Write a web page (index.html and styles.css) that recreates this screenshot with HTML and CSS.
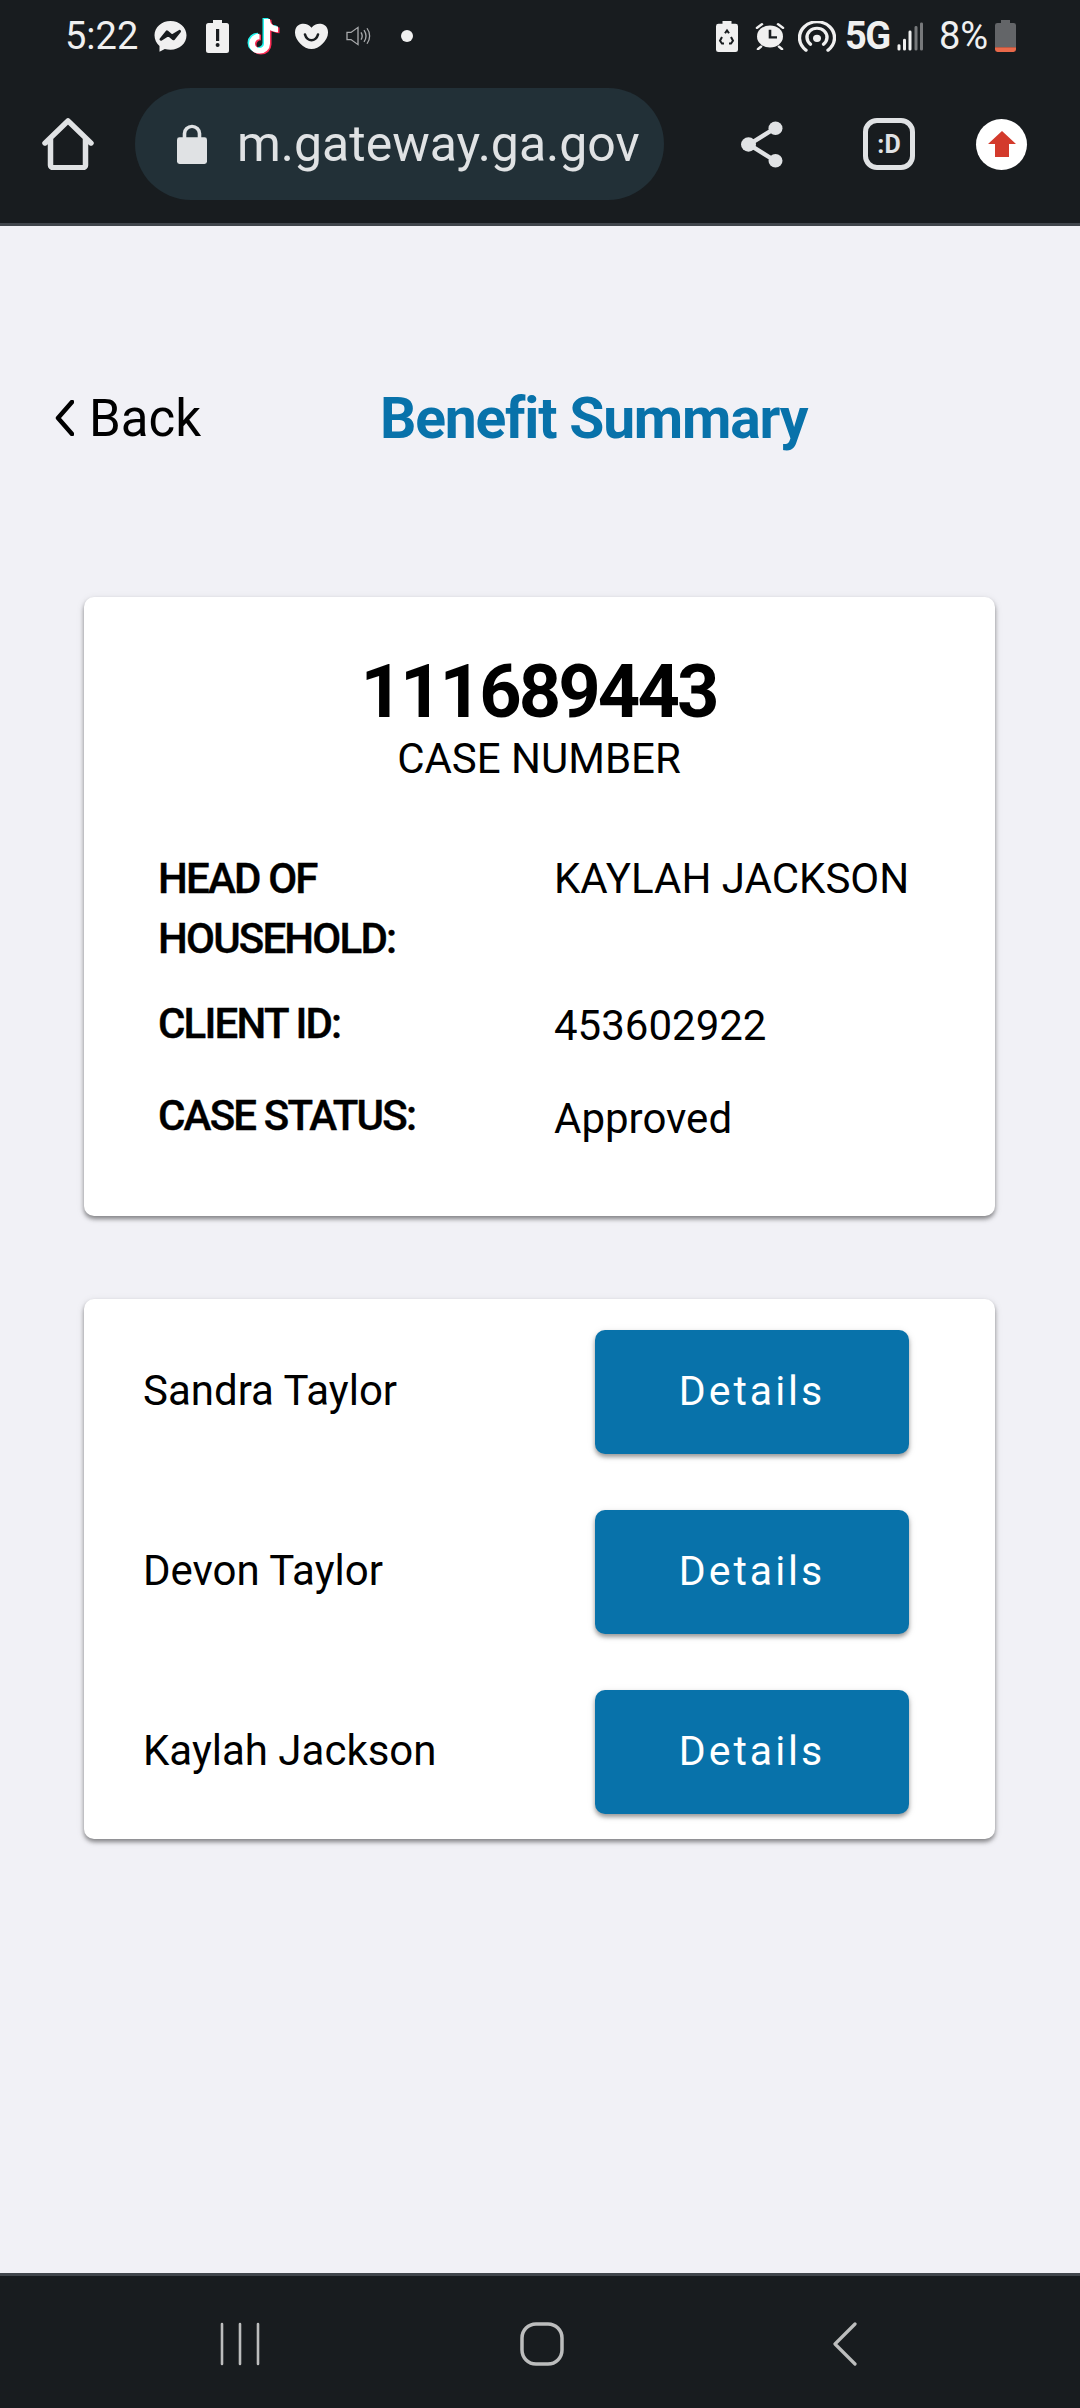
FILE: index.html
```html
<!DOCTYPE html>
<html lang="en">
<head>
<meta charset="utf-8">
<title>Benefit Summary</title>
<link rel="stylesheet" href="styles.css">
</head>
<body>
<header class="chrome">
  <div class="status">
    <div class="status-left">
      <span class="time">5:22</span>
      <svg class="i-msg" viewBox="0 0 33 35" preserveAspectRatio="none"><path fill="#f0f0f0" d="M16.5 1C7.5 1 .5 7.6.5 16.3c0 4.6 1.9 8.5 5 11.2v6.3l5.3-3c1.8.5 3.7.8 5.7.8 9 0 16-6.6 16-15.300S25.5 1 16.5 1z"/><path fill="none" stroke="#181c1f" stroke-width="3" stroke-linejoin="round" d="M7 20.5l6-8 5 4.5 7.5-5-6 8-5-4.5z"/></svg>
      <svg class="i-batt" viewBox="0 0 23 33"><path fill="#f0f0f0" d="M7 0h9v3h4.500A2.500 2.500 0 0 1 23 5.500V30.500A2.500 2.500 0 0 1 20.500 33h-18A2.500 2.500 0 0 1 0 30.500V5.500A2.500 2.500 0 0 1 2.500 3H7z"/><rect x="10" y="9" width="3.200" height="12" fill="#181c1f"/><circle cx="11.600" cy="25" r="2" fill="#181c1f"/></svg>
      <svg class="i-tik" viewBox="0 0 35 41" preserveAspectRatio="none"><g fill="none" stroke-width="6"><path stroke="#25f4ee" transform="translate(-1.500 -1)" d="M20 2v26a7.500 7.500 0 1 1-7.500-7.500M20 4c.5 5 5 9 11 9"/><path stroke="#fe2c55" transform="translate(1.500 1)" d="M20 2v26a7.500 7.500 0 1 1-7.500-7.500M20 4c.5 5 5 9 11 9"/><path stroke="#fff" d="M20 2v26a7.500 7.500 0 1 1-7.500-7.500M20 4c.5 5 5 9 11 9"/></g></svg>
      <svg class="i-heart" viewBox="0 0 33 27" preserveAspectRatio="none"><path fill="#f0f0f0" d="M16.500 5C14 1.500 10 0 6 1 2 2 0 5.500 0 10c0 8 9 17 16.500 17S33 18 33 10c0-4.500-2-8-6-9-4-1-8 .5-10.500 4z"/><path fill="none" stroke="#181c1f" stroke-width="2.600" stroke-linecap="round" d="M10 12c1 4 4 6 6.500 6s5.500-2 6.500-6"/></svg>
      <svg class="i-vol" viewBox="0 0 25 22" preserveAspectRatio="none"><g fill="none" stroke="#a9abad" stroke-width="1.300"><path d="M1 7h4l7-5.500v19L5 15H1z"/><path d="M15 7c1.500 2.500 1.500 5.500 0 8M18 4.500c2.500 4 2.500 9 0 13M21 2.500c3.500 5 3.500 12 0 17"/></g></svg>
      <span class="dot"></span>
    </div>
    <div class="status-right">
      <svg class="i-rec" viewBox="0 0 22 33" preserveAspectRatio="none"><path fill="#f0f0f0" d="M6.500 0h9v3h4A2.500 2.500 0 0 1 22 5.500v25a2.500 2.500 0 0 1-2.500 2.500h-17A2.500 2.500 0 0 1 0 30.500v-25A2.500 2.500 0 0 1 2.500 3h4z"/><path fill="none" stroke="#181c1f" stroke-width="2" d="M9 13l2-3 2 3M15 17l2 4-2 3h-2M8 24H6l-2-3 2-4"/></svg>
      <svg class="i-alarm" viewBox="0 0 30 33" preserveAspectRatio="none"><circle cx="15" cy="17" r="13" fill="#f0f0f0"/><path fill="none" stroke="#181c1f" stroke-width="2.600" d="M15 9v9h7"/><path fill="none" stroke="#f0f0f0" stroke-width="2.600" stroke-linecap="round" d="M2 7l5-4.500M28 7l-5-4.500M6 29l-3 3M24 29l3 3"/></svg>
      <svg class="i-hot" viewBox="0 0 38 34" preserveAspectRatio="none"><g fill="none" stroke="#f0f0f0" stroke-width="3.400" stroke-linecap="round"><path d="M8 32A17.500 17.500 0 1 1 30 32"/><path d="M12.500 25.500A10 10 0 1 1 25.500 25.500"/></g><circle cx="19" cy="19" r="4" fill="#f0f0f0"/></svg>
      <span class="net">5G</span>
      <svg class="i-sig" viewBox="0 0 27 32" preserveAspectRatio="none"><g fill="none" stroke-width="3" stroke-linecap="round"><path stroke="#f0f0f0" d="M2 30v-4M7.500 30V20M13 30V11"/><path stroke="#77797b" d="M19 30V6M24.500 30V2"/></g></svg>
      <span class="pct">8%</span>
      <svg class="i-level" viewBox="0 0 21 33" preserveAspectRatio="none"><path fill="#636568" d="M6 0h9v3h3.500A2.500 2.500 0 0 1 21 5.500V28H0V5.500A2.500 2.500 0 0 1 2.500 3H6z"/><path fill="#e9694a" d="M0 28h21v2.500a2.500 2.500 0 0 1-2.500 2.500h-16A2.500 2.500 0 0 1 0 30.500z"/></svg>
    </div>
  </div>
  <div class="toolbar">
    <svg class="i-home" viewBox="0 0 52 54" preserveAspectRatio="none"><path fill="none" stroke="#e0e2e4" stroke-width="5.500" stroke-linejoin="round" stroke-linecap="round" d="M3 26L26 3l23 23M8.500 22v27a2.500 2.500 0 0 0 2.500 2.500h30a2.500 2.500 0 0 0 2.500-2.500V22"/></svg>
    <div class="pill">
      <svg class="i-lock" viewBox="0 0 30 42" preserveAspectRatio="none"><path fill="none" stroke="#e0e2e4" stroke-width="3.600" d="M7.500 15V10a7.500 7.500 0 0 1 15 0v5"/><rect y="14" width="30" height="28" rx="2.500" fill="#e0e2e4"/></svg>
      <span class="url">m.gateway.ga.gov</span>
    </div>
    <svg class="i-share" viewBox="0 0 42 49" preserveAspectRatio="none"><path fill="none" stroke="#e0e2e4" stroke-width="4.500" d="M34 7.500L8 24.500l26 17"/><circle cx="34.500" cy="7.500" r="7" fill="#e0e2e4"/><circle cx="7.500" cy="24.500" r="7.500" fill="#e0e2e4"/><circle cx="34.500" cy="41.500" r="7" fill="#e0e2e4"/></svg>
    <div class="tabs">:D</div>
    <div class="update"><svg class="i-up" viewBox="0 0 28 26"><path fill="#d33a2c" d="M14 0l14 13h-7v13H7V13H0z"/></svg></div>
  </div>
</header>

<main class="content">
  <div class="titlebar">
    <a class="back">
      <svg class="i-back" viewBox="0 0 19 36"><path fill="none" stroke="#000" stroke-width="4.500" stroke-linecap="round" stroke-linejoin="round" d="M17 2L3 18l14 16"/></svg>
      <span>Back</span>
    </a>
    <h1 class="title">Benefit Summary</h1>
  </div>

  <section class="card case">
    <div class="case-number">111689443</div>
    <div class="case-label">CASE NUMBER</div>
    <dl class="facts">
      <dt>HEAD OF HOUSEHOLD:</dt><dd>KAYLAH JACKSON</dd>
      <dt>CLIENT ID:</dt><dd>453602922</dd>
      <dt>CASE STATUS:</dt><dd>Approved</dd>
    </dl>
  </section>

  <section class="card people">
    <div class="person"><span class="name">Sandra Taylor</span><button class="details">Details</button></div>
    <div class="person"><span class="name">Devon Taylor</span><button class="details">Details</button></div>
    <div class="person"><span class="name">Kaylah Jackson</span><button class="details">Details</button></div>
  </section>
</main>

<footer class="nav">
  <svg class="i-recents" viewBox="0 0 42 44"><path fill="none" stroke="#bcbdbd" stroke-width="2.600" stroke-linecap="round" d="M3 2v40M21 2v40M39 2v40"/></svg>
  <svg class="i-navhome" viewBox="0 0 44 44"><rect x="2" y="2" width="40" height="40" rx="14" fill="none" stroke="#bcbdbd" stroke-width="3.500"/></svg>
  <svg class="i-navback" viewBox="0 0 24 44"><path fill="none" stroke="#bcbdbd" stroke-width="3.200" stroke-linecap="round" stroke-linejoin="round" d="M22 2L2 22l20 20"/></svg>
</footer>
</body>
</html>
```

FILE: styles.css
```css
* { box-sizing: border-box; }
html, body { margin: 0; padding: 0; }
body {
  width: 1080px;
  height: 2408px;
  display: flex;
  flex-direction: column;
  background: #f1f1f6;
  font-family: Roboto, sans-serif;
  color: #000;
  overflow: hidden;
}
svg { display: block; flex: none; }

/* browser chrome */
.chrome {
  height: 226px;
  flex: none;
  background: #181c1f;
  border-bottom: 3px solid #41464c;
}
.status {
  height: 72px;
  padding: 0 64px 0 65px;
  display: flex;
  align-items: center;
  justify-content: space-between;
}
.status-left, .status-right { display: flex; align-items: center; }
.time { font-size: 38px; color: #f0f0f0; width: 89px; }
.i-msg { width: 33px; height: 33px; margin-right: 19px; }
.i-batt { width: 23px; height: 33px; margin-right: 18px; }
.i-tik { width: 35px; height: 39px; margin-right: 13px; }
.i-heart { width: 33px; height: 26px; margin-right: 18px; }
.i-vol { width: 25px; height: 20px; margin-right: 30px; }
.dot { width: 12px; height: 12px; border-radius: 50%; background: #f0f0f0; }
.i-rec { width: 22px; height: 31px; margin-right: 17px; }
.i-alarm { width: 30px; height: 28px; margin-right: 13px; }
.i-hot { width: 38px; height: 31px; margin-right: 10px; }
.net { font-size: 38px; font-weight: 700; color: #f0f0f0; width: 51px; letter-spacing: -1.5px; margin-left: -1px; margin-right: 1px; }
.i-sig { width: 27px; height: 29px; margin-right: 15px; }
.pct { font-size: 38px; color: #f0f0f0; width: 56px; }
.i-level { width: 21px; height: 32px; }

.toolbar {
  display: flex;
  align-items: center;
  height: 112px;
  margin-top: 16px;
  padding-left: 42px;
}
.i-home { width: 52px; height: 52px; margin-right: 41px; }
.pill {
  width: 529px;
  height: 112px;
  border-radius: 56px;
  background: #223037;
  display: flex;
  align-items: center;
  padding-left: 42px;
  margin-right: 77px;
}
.i-lock { width: 30px; height: 40px; margin-right: 30px; }
.url { font-size: 50px; color: #e0e2e4; white-space: nowrap; }
.i-share { width: 42px; height: 47px; margin-right: 80px; }
.tabs {
  width: 52px;
  height: 52px;
  border: 5px solid #e0e2e4;
  border-radius: 14px;
  color: #e0e2e4;
  font-size: 25px;
  font-weight: 700;
  display: flex;
  align-items: center;
  justify-content: center;
  margin-right: 61px;
}
.update {
  width: 51px;
  height: 51px;
  border-radius: 50%;
  background: #fff;
  display: flex;
  align-items: center;
  justify-content: center;
}
.i-up { width: 28px; height: 26px; }

/* page */
.content {
  flex: 1;
  padding: 0 85px;
  display: flex;
  flex-direction: column;
}
.titlebar {
  display: flex;
  align-items: center;
  height: 76px;
  margin: 154px -30px 0;
}
.back {
  display: flex;
  align-items: center;
  font-size: 51px;
  width: 325px;
}
.i-back { width: 19px; height: 36px; margin-right: 15px; }
.title {
  margin: 0;
  font-size: 57px;
  font-weight: 700;
  color: #0872aa;
  letter-spacing: -1.2px;
}
.card {
  background: #fff;
  border-radius: 10px;
  box-shadow: 0 3px 4px rgba(0,0,0,.4), 0 2px 8px rgba(0,0,0,.1);
}
.case {
  margin: 141px 0 0 -1px;
  height: 619px;
  padding-top: 52px;
  text-align: center;
  width: 911px;
}
.case-number { font-size: 74px; font-weight: 700; line-height: 86px; letter-spacing: -2.9px; margin-left: -2px; }
.case-label { font-size: 42px; line-height: 48px; margin-left: -1px; }
.facts {
  margin: 66px 0 0;
  padding-left: 74px;
  display: grid;
  grid-template-columns: 396px 1fr;
  text-align: left;
  font-size: 42px;
  line-height: 60px;
}
.facts dt { font-weight: 500; letter-spacing: -1.8px; width: 300px; -webkit-text-stroke: 0.4px #000; }
.facts dd { margin: 0; }
.facts dt:nth-of-type(2) { margin-top: 25px; }
.facts dd:nth-of-type(2) { margin-top: 27px; }
.facts dt:nth-of-type(3) { margin-top: 30px; }
.facts dd:nth-of-type(3) { margin-top: 33px; }

.people {
  margin: 83px 0 0 -1px;
  width: 911px;
  height: 540px;
  padding: 31px 86px 25px 59px;
  display: flex;
  flex-direction: column;
  gap: 56px;
}
.person {
  display: flex;
  align-items: center;
  justify-content: space-between;
  height: 124px;
  font-size: 42px;
}
.name { padding-bottom: 4px; }
.details {
  width: 314px;
  height: 124px;
  border: 0;
  border-radius: 10px;
  padding: 0 0 3px;
  background: #0872aa;
  color: #fff;
  font-family: Roboto, sans-serif;
  font-size: 41px;
  font-weight: 400;
  letter-spacing: 3px;
  box-shadow: 0 3px 4px rgba(0,0,0,.35), 0 2px 8px rgba(0,0,0,.1);
}

/* nav bar */
.nav {
  height: 135px;
  flex: none;
  background: #181c1f;
  border-top: 3px solid #41464c;
  display: flex;
  align-items: flex-start;
  padding: 46px 0 0 219px;
}
.i-recents { width: 42px; height: 44px; margin-right: 259px; }
.i-navhome { width: 44px; height: 44px; margin-right: 269px; }
.i-navback { width: 24px; height: 44px; }
```
